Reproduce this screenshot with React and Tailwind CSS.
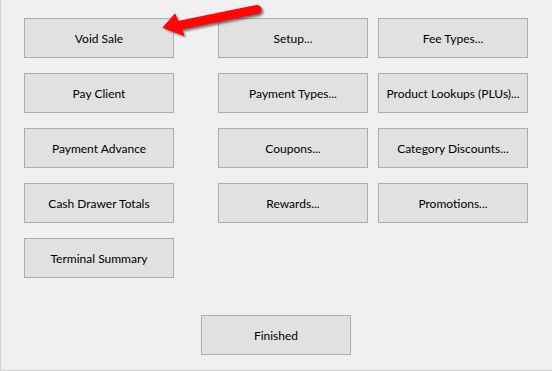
import React from "react";

function Btn({ children }) {
  return (
    <div className="w-[150px] h-[40px] border border-[#adadad] bg-[#e1e1e1] flex items-center justify-center text-[12px] text-[#000] pt-[2px]">
      {children}
    </div>
  );
}

export default function App() {
  return (
    <div
      className="relative w-[552px] h-[371px] bg-[#f0f0f0] border-l border-b border-[#d2d2d2] overflow-hidden"
      style={{ fontFamily: '"Segoe UI", Lato, "Noto Sans", sans-serif' }}
    >
      <div className="pt-[18px] pl-[23px] flex flex-col">
        <div className="flex">
          <div className="flex flex-col gap-[15px]">
            <Btn>Void Sale</Btn>
            <Btn>Pay Client</Btn>
            <Btn>Payment Advance</Btn>
            <Btn>Cash Drawer Totals</Btn>
            <Btn>Terminal Summary</Btn>
          </div>
          <div className="ml-[44px] grid grid-cols-[150px_150px] gap-x-[10px] gap-y-[15px] self-start">
            <Btn>Setup...</Btn>
            <Btn>Fee Types...</Btn>
            <Btn>Payment Types...</Btn>
            <Btn>Product Lookups (PLUs)...</Btn>
            <Btn>Coupons...</Btn>
            <Btn>Category Discounts...</Btn>
            <Btn>Rewards...</Btn>
            <Btn>Promotions...</Btn>
          </div>
        </div>
        <div className="mt-[37px] ml-[177px]">
          <Btn>Finished</Btn>
        </div>
      </div>
      <svg
        className="absolute left-0 top-0 pointer-events-none"
        width="552"
        height="60"
        viewBox="0 0 552 60"
      >
        <defs>
          <filter id="sh" x="-20%" y="-50%" width="140%" height="200%">
            <feGaussianBlur stdDeviation="1.3" />
          </filter>
        </defs>
        <g transform="translate(2,2)" filter="url(#sh)" opacity="0.6">
          <line x1="180" y1="25" x2="256" y2="9.5" stroke="#222" strokeWidth="9" strokeLinecap="round" />
          <polygon points="162,27.5 174,14 183,35.5" fill="#222" />
        </g>
        <line x1="180" y1="25" x2="256" y2="9.5" stroke="#ff0505" strokeWidth="9" strokeLinecap="round" />
        <polygon points="162,27.5 174,14 183,35.5" fill="#ff0505" strokeLinejoin="round" stroke="#ff0505" strokeWidth="1" />
      </svg>
    </div>
  );
}
